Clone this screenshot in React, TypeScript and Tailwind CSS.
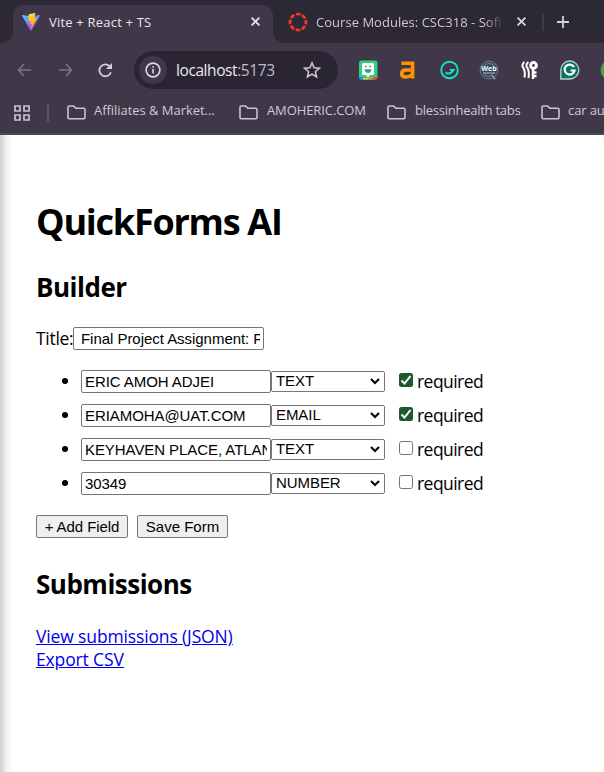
import React from 'react';

const ui = "font-['Open_Sans','Noto_Sans',sans-serif]";
const control = "font-['Liberation_Sans',Arial,sans-serif]";

function Folder() {
  return (
    <svg className="mt-[2px] h-[15px] w-[19px] shrink-0" viewBox="0 0 19 15" fill="none" stroke="#c9c4d0" strokeWidth="1.6">
      <path d="M1 2.2Q1 1 2.2 1H6.5L8.8 3.2H16.8Q18 3.2 18 4.4V12.6Q18 13.8 16.8 13.8H2.2Q1 13.8 1 12.6Z" />
    </svg>
  );
}

function Close({ color }: { color: string }) {
  return (
    <svg className="h-[9px] w-[9px] shrink-0" viewBox="0 0 9 9" fill="none" stroke={color} strokeWidth="1.7">
      <path d="M.6.6 8.4 8.4M8.4.6.6 8.4" />
    </svg>
  );
}

function ViteLogo() {
  return (
    <svg className="h-[18px] w-[18px] shrink-0" viewBox="0 0 32 32">
      <defs>
        <linearGradient id="viteBlue" x1="0" y1="0" x2=".6" y2="1">
          <stop stopColor="#41d1ff" />
          <stop offset="1" stopColor="#bd34fe" />
        </linearGradient>
        <linearGradient id="viteBolt" x1=".4" y1="0" x2=".6" y2="1">
          <stop stopColor="#ffea83" />
          <stop offset=".2" stopColor="#ffcb20" />
          <stop offset="1" stopColor="#ffa800" />
        </linearGradient>
      </defs>
      <path fill="url(#viteBlue)" d="M31.8 4.7 16.9 31.3q-.9 1.2-1.8 0L.1 4.7Q-.2 3.3 1.2 3.4L16 6 30.7 3.4q1.4-.1 1.1 1.3Z" />
      <path fill="url(#viteBolt)" d="m23.2.1-11 2.1q-.4.1-.4.5l-.7 11.5q0 .6.6.6l3.1-.7q.6 0 .6.6l-.9 4.500q0 .6.6.6l1.9-.6q.6 0 .6.6L16.2 26.800q.2.9.9.1L26.300 9.500q.1-.7-.5-.7l-3.200.6q-.6-.1-.5-.7L23.800.8q0-.7-.6-.7Z" />
    </svg>
  );
}

function TabStrip() {
  return (
    <div className="flex h-[43px] items-end bg-[#2c2834]">
      <div className="h-3 w-[13px] bg-[#403849]">
        <div className="h-3 w-[13px] rounded-br-[12px] bg-[#2c2834]" />
      </div>
      <div className="flex h-[38px] w-[260px] items-center rounded-t-[10px] bg-[#403849] pl-[9px] pr-[13px] pb-[5px]">
        <ViteLogo />
        <span className="ml-[9px] mt-[2px] flex-1 whitespace-nowrap text-[13px] tracking-[0.2px] text-[#e9e4ee]">Vite + React + TS</span>
        <Close color="#e9e4ee" />
      </div>
      <div className="h-3 w-[13px] bg-[#403849]">
        <div className="h-3 w-[13px] rounded-bl-[12px] bg-[#2c2834]" />
      </div>
      <div className="flex h-[38px] flex-1 items-center pb-[5px] pl-[2px]">
        <svg className="h-5 w-5 shrink-0" viewBox="0 0 20 20" fill="none" stroke="#f03a2d">
          <circle cx="10" cy="10" r="8" strokeWidth="2.7" strokeDasharray="4.7 1.58" strokeDashoffset="2.35" />
        </svg>
        <span className="ml-[8px] mt-[2px] w-[189px] overflow-hidden whitespace-nowrap text-[13px] tracking-[0.03px] text-[#cfc5df] [mask-image:linear-gradient(to_right,black_168px,transparent_188px)]">
          Course Modules: CSC318 - Softw
        </span>
        <span className="ml-[12px] flex"><Close color="#e1d8ef" /></span>
        <span className="ml-[16px] h-[18px] w-[2px] bg-[#403a48]" />
        <svg className="ml-[13px] h-[12px] w-[12px]" viewBox="0 0 12 12" stroke="#d5cfdd" strokeWidth="1.8">
          <path d="M6 0V12M0 6H12" />
        </svg>
      </div>
    </div>
  );
}

function Extensions() {
  return (
    <div className="ml-[20px] flex shrink-0 items-center gap-[20.4px]">
      <svg className="h-5 w-5 shrink-0" viewBox="0 0 20 20">
        <rect x="1" y=".5" width="18.500" height="19" rx="2.500" fill="#32cc83" />
        <path d="M1 17h4l2 2.500H3Q1 19.500 1 17Z" fill="#338cf0" />
        <path d="M5 18h5v1.500H5Z" fill="#ffcc33" />
        <path d="M10 18h5v1.500h-5Z" fill="#ff9a2e" />
        <path d="M14 18l5.500-2Q19.500 19.500 17 19.500h-3Z" fill="#e84d43" />
        <path d="M5.500 3h9q1.500 0 1.500 1.500v9q0 1.500-1.500 1.500H12l-2 2.500L8 15H5.500Q4 15 4 13.500v-9Q4 3 5.500 3Z" fill="#fff" />
        <path d="M7 6.500h1.500M11.500 6.500H13" stroke="#238e65" strokeWidth="1.6" />
        <path d="M6.500 9.300h7q-.4 3.700-3.500 3.700t-3.500-3.700Z" fill="#28a66e" />
      </svg>
      <svg className="h-5 w-5 shrink-0" viewBox="0 0 20 20" fill="none" stroke="#ff9200" strokeWidth="3.6">
        <path d="M3.500 3.300H16M14.600 2v16.500M14 10H7.800Q3.700 10 3.700 13.500t4 3.500q3.800 0 6.300-2.300" />
      </svg>
      <svg className="h-5 w-5 shrink-0" viewBox="0 0 20 20" fill="none" stroke="#10e5c4" strokeWidth="1.9">
        <circle cx="10.500" cy="10" r="8.300" />
        <path d="M6.500 12.500q4.500 3 8-2.500h-3.500" strokeWidth="2.1" />
      </svg>
      <svg className="h-5 w-5 shrink-0" viewBox="0 0 20 20">
        <circle cx="10" cy="10" r="8.900" fill="#34475b" stroke="#747584" />
        <path d="M13 14l4 5-2 .5-3-4Z" fill="#9093a2" />
        <path d="M4 6Q10 1 16 6M5 15q5 3 9 0" stroke="#6d8499" fill="none" />
        <text x="10" y="10.500" textAnchor="middle" fontSize="7" fontWeight="700" fontFamily="Open Sans" fill="#fff">Web</text>
        <path d="M4 13h12" stroke="#a6adb6" strokeWidth="1.500" strokeDasharray="1.500 .6" />
      </svg>
      <svg className="h-5 w-5 shrink-0" viewBox="0 0 20 20" fill="none" stroke="#fff">
        <path d="M4.500 2Q.7 5 3.700 8.500Q5.500 12 4.500 17.500M8.500 2Q4.700 5 7.700 8.500Q9.500 12 8.500 18" strokeWidth="2" />
        <circle cx="13.500" cy="5.500" r="2.900" strokeWidth="3" />
        <path d="M13 8.500v10.500M13 12.500h3.500M13 16h3.500" strokeWidth="2.400" />
      </svg>
      <svg className="h-5 w-5 shrink-0" viewBox="0 0 20 20">
        <path d="M.800 19V10a9 9 0 1 1 9 9Z" fill="#08745f" stroke="#c4cfd0" strokeWidth="1.300" />
        <path d="M14 7A5 5 0 1 0 14.600 10.500h-4" fill="none" stroke="#fff" strokeWidth="2.200" />
      </svg>
      <svg className="h-5 w-5 shrink-0" viewBox="0 0 20 20"><circle cx="10" cy="10" r="9.500" fill="#4aa24d" /></svg>
    </div>
  );
}

function Toolbar() {
  return (
    <div className="flex h-[54px] items-center overflow-hidden bg-[#403849] pl-[17px]">
      <svg className="h-[14px] w-[15px] shrink-0" viewBox="0 0 15 14" fill="none" stroke="#7b7386" strokeWidth="1.6">
        <path d="M14 7H1.500M7 1 1.500 7 7 13" />
      </svg>
      <svg className="ml-[26px] h-[14px] w-[15px] shrink-0" viewBox="0 0 15 14" fill="none" stroke="#7b7386" strokeWidth="1.6">
        <path d="M1 7h12.500M8 1l5.500 6L8 13" />
      </svg>
      <svg className="ml-[25px] h-[15px] w-[15px] shrink-0" viewBox="0 0 15 15" fill="none" stroke="#d3cadd" strokeWidth="1.8">
        <path d="M12.900 9.200A5.900 5.900 0 1 1 11.800 3.500L13 4.800" />
        <path d="M14 0v6H8Z" fill="#d3cadd" stroke="none" />
      </svg>
      <div className="ml-[21px] flex h-[38px] w-[204px] shrink-0 items-center rounded-full bg-[#2a2532] pl-[5px] pr-[17px]">
        <span className="flex size-7 items-center justify-center rounded-full bg-[#403849]">
          <svg className="h-4 w-4" viewBox="0 0 16 16" fill="none" stroke="#dcd6e2" strokeWidth="1.6">
            <circle cx="8" cy="8" r="6.9" />
            <path d="M8 7v4.500M8 4.200v1.600" />
          </svg>
        </span>
        <span className="ml-[9px] mt-[2px] flex-1 text-[15.5px] tracking-[-0.42px] text-[#eee8f4]">localhost<span className="text-[#c0b9ca]">:5173</span></span>
        <svg className="h-[18px] w-[18px]" viewBox="0 0 18 18" fill="none" stroke="#d3ccdb" strokeWidth="1.5">
          <path d="m9 1.800 2.100 4.900 5.300.5-4 3.500 1.200 5.200L9 13.100l-4.600 2.800 1.200-5.200-4-3.500 5.300-.5Z" />
        </svg>
      </div>
      <Extensions />
    </div>
  );
}

function Bookmarks() {
  return (
    <div className="flex h-[36px] items-center overflow-hidden bg-[#403849] pb-[8px] pl-[14px] text-[13px] text-[#cec9d3]">
      <svg className="mt-1 h-4 w-4 shrink-0" viewBox="0 0 16 16" fill="none" stroke="#c9c4d0" strokeWidth="1.7">
        <path d="M1 1h5v5H1ZM10 1h5v5h-5ZM1 10h5v5H1ZM10 10h5v5h-5Z" />
      </svg>
      <span className="ml-[17px] mt-1 h-[18px] w-[2px] shrink-0 rounded bg-[#5c5467]" />
      <span className="ml-[18px] flex w-[172px] shrink-0 items-center gap-2 whitespace-nowrap tracking-[-0.04px]"><Folder />Affiliates &amp; Market...</span>
      <span className="flex w-[148px] shrink-0 items-center gap-[9px] tracking-[-0.1px]"><Folder />AMOHERIC.COM</span>
      <span className="flex w-[154px] shrink-0 items-center gap-[9px] whitespace-nowrap tracking-[-0.25px]"><Folder />blessinhealth tabs</span>
      <span className="flex shrink-0 items-center gap-2 whitespace-nowrap tracking-[-0.1px]"><Folder />car au</span>
    </div>
  );
}

const fields = [
  { label: 'ERIC AMOH ADJEI', type: 'TEXT', required: true },
  { label: 'ERIAMOHA@UAT.COM', type: 'EMAIL', required: true },
  { label: 'KEYHAVEN PLACE, ATLANTA', type: 'TEXT', required: false },
  { label: '30349', type: 'NUMBER', required: false },
];

function Field({ label, type, required }: (typeof fields)[number]) {
  return (
    <li className="flex h-[34px] items-center">
      <span className="mr-[13px] size-[6px] rounded-full bg-black" />
      <input readOnly value={label} className={`${control} h-[23px] w-[190px] rounded-[2px] border border-[#767676] bg-white px-[3px] text-[15px] tracking-[-0.07px]`} />
      <span className={`${control} mr-[14px] flex h-[21px] w-[114px] items-center justify-between rounded-[2px] border border-[#767676] pl-[4px] pr-[4px] text-[15px] tracking-[-0.07px]`}>
        {type}
        <svg className="h-[7px] w-[10px]" viewBox="0 0 10 7" fill="none" stroke="black" strokeWidth="2"><path d="m1 1 4 4 4-4" /></svg>
      </span>
      <span className={`mb-[3px] flex size-[14px] items-center justify-center rounded-[2.5px] ${required ? 'bg-[#1d5a2e]' : 'border border-[#767676] bg-white'}`}>
        {required && <svg className="size-[12px]" viewBox="0 0 12 12" fill="none" stroke="white" strokeWidth="2"><path d="m1.500 6.500 3 3 6-7.500" /></svg>}
      </span>
      <span className="ml-[4px] text-[17.5px] tracking-[-0.55px]">required</span>
    </li>
  );
}

export default function App() {
  return (
    <div className={`${ui} flex h-[772px] w-[604px] flex-col overflow-hidden bg-white text-black`}>
      <TabStrip />
      <Toolbar />
      <Bookmarks />
      <div className="h-[2px] shrink-0 bg-[#4b494d]" />
      <div className="flex min-h-0 flex-1">
        <div className="w-[13px] bg-gradient-to-r from-[#cfcfcf] via-[#f2f2f2] to-white" />
        <main className="flex-1 pl-[23px] pt-[62px]">
          <h1 className="h-[50px] text-[36px] leading-[50px] font-bold tracking-[-1.25px]">QuickForms AI</h1>
          <h2 className="mt-[22px] h-[36px] text-[26px] leading-[36px] font-bold tracking-[-0.5px]">Builder</h2>
          <div className="mt-[22px] flex h-[23px] items-center">
            <span className="w-[37px] whitespace-nowrap text-[17.5px] tracking-[-0.3px]">Title:</span>
            <input readOnly value="Final Project Assignment: Form" className={`${control} h-[23px] w-[191px] rounded-[2px] border border-[#767676] bg-white pl-[7px] pr-[3px] text-[15px] tracking-[-0.04px]`} />
          </div>
          <ul className="mt-[14px] pl-[26px]">
            {fields.map((field, i) => <Field key={i} {...field} />)}
          </ul>
          <div className="mt-[15px] flex gap-[9px]">
            <button className={`${control} h-[23px] w-[92px] rounded-[2px] border border-[#767676] bg-[#efefef] text-[15px] leading-[21px] tracking-[-0.07px]`}>+ Add Field</button>
            <button className={`${control} h-[23px] w-[91px] rounded-[2px] border border-[#767676] bg-[#efefef] text-[15px] leading-[21px]`}>Save Form</button>
          </div>
          <h2 className="mt-[28px] h-[36px] text-[26px] leading-[36px] font-bold tracking-[-0.5px]">Submissions</h2>
          <div className="mt-[23px] flex flex-col items-start text-[17.5px] leading-[23px] text-[#0000ee] underline tracking-[-0.14px]">
            <a>View submissions (JSON)</a>
            <a>Export CSV</a>
          </div>
        </main>
      </div>
    </div>
  );
}
